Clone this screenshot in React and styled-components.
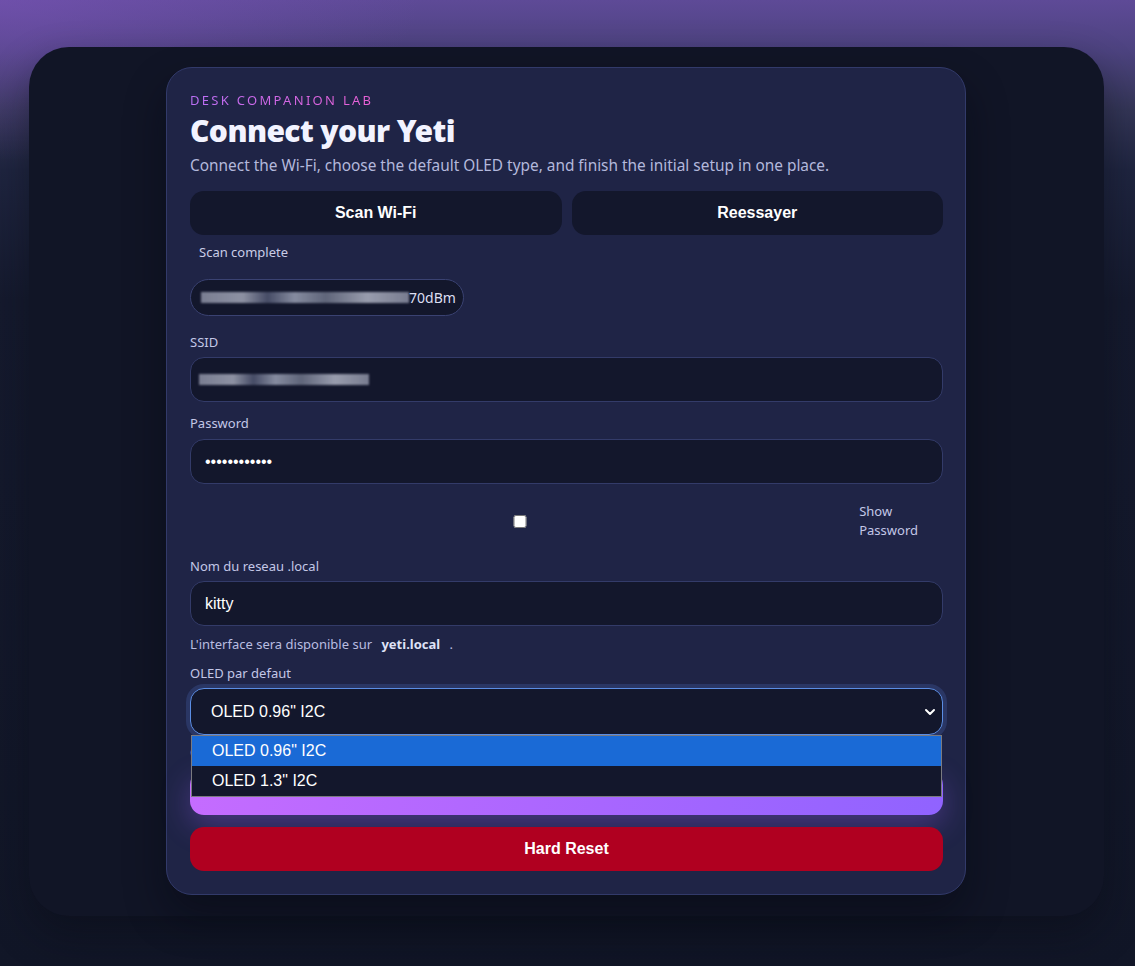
import React from 'react';
import styled, { createGlobalStyle } from 'styled-components';

const GlobalStyle = createGlobalStyle`
  html, body {
    margin: 0;
    padding: 0;
  }
  body {
    min-height: 966px;
    font-family: "Noto Sans", "Open Sans", sans-serif;
    background:
      radial-gradient(ellipse 420px 160px at 0% 0%, rgba(124, 84, 186, 0.55), transparent 100%),
      linear-gradient(180deg, #5e4a97 0px, #4d4380 50px, #343657 110px, #1f2540 170px, #151a2e 300px, #111627 100%);
  }
`;

const Page = styled.div`
  padding: 47px 0 51px;
`;

const Frame = styled.div`
  width: 1075px;
  margin-left: 29px;
  padding: 20px 0 21px;
  box-sizing: border-box;
  background: #111526;
  border-radius: 40px;
  box-shadow: 0 18px 40px rgba(8, 10, 20, 0.45);
`;

const Card = styled.main`
  width: 800px;
  margin-left: 137px;
  box-sizing: border-box;
  padding: 23px 22px 23px 23px;
  background: #1f2446;
  border: 1px solid #323a6a;
  border-radius: 26px;
  box-shadow: 0 20px 40px rgba(5, 7, 16, 0.45);
  display: flex;
  flex-direction: column;
`;

const Eyebrow = styled.div`
  font-size: 13px;
  line-height: 18px;
  letter-spacing: 2.3px;
  text-transform: uppercase;
  background: linear-gradient(90deg, #bb6ff6, #ea60d6);
  -webkit-background-clip: text;
  background-clip: text;
  color: transparent;
  width: max-content;
`;

const Title = styled.h1`
  margin: 4px 0 0;
  font-size: 30px;
  line-height: 36px;
  font-weight: 900;
  letter-spacing: -0.6px;
  color: #f2f3ff;
`;

const Subtitle = styled.p`
  margin: 6px 0 0;
  font-size: 15.4px;
  line-height: 22px;
  color: #b3b8dc;
`;

const ButtonRow = styled.div`
  margin-top: 14px;
  display: grid;
  grid-template-columns: 1fr 1fr;
  gap: 10px;
`;

const Button = styled.button`
  height: 44px;
  border: none;
  border-radius: 14px;
  padding: 0 0 ${(p) => (p.$variant === 'primary' ? 8 : 0)}px;
  font-family: "Liberation Sans", Arial, sans-serif;
  font-size: 16px;
  font-weight: 700;
  color: #ffffff;
  background: ${(p) =>
    p.$variant === 'primary'
      ? 'linear-gradient(100deg, #c56cff 0%, #a866ff 55%, #9063ff 100%)'
      : p.$variant === 'danger'
      ? '#b00020'
      : '#13172c'};
  box-shadow: ${(p) =>
    p.$variant === 'primary' ? '0 10px 30px rgba(160, 96, 255, 0.32)' : 'none'};
  margin-top: ${(p) => p.$top || 0}px;
  cursor: pointer;
`;

const Status = styled.div`
  margin-top: 8px;
  padding-left: 9px;
  font-size: 13px;
  line-height: 18px;
  color: #c9cce6;
`;

const NetworkPill = styled.div`
  margin-top: 18px;
  width: 274px;
  height: 37px;
  box-sizing: border-box;
  display: flex;
  align-items: center;
  padding-left: 10px;
  border: 1px solid #3a4272;
  border-radius: 19px;
  background: #13172c;
  font-size: 14px;
  color: #dcdff2;
`;

const Redacted = styled.span`
  display: inline-block;
  width: ${(p) => p.$w}px;
  height: 11px;
  background: linear-gradient(
    90deg,
    #8c90a4 0%,
    #a3a7b8 20%,
    #4f5570 32%,
    #9aa0b4 45%,
    #6d7388 60%,
    #b0b4c4 80%,
    #8a8ea2 100%
  );
  filter: blur(1px);
  opacity: 0.85;
`;

const Label = styled.label`
  display: block;
  margin-top: ${(p) => p.$top}px;
  font-size: 13px;
  line-height: 18px;
  color: #c3c7e6;
`;

const inputLook = `
  height: 45px;
  box-sizing: border-box;
  border: 1px solid #333b69;
  border-radius: 14px;
  background: #13172c;
  color: #ffffff;
  font-family: "Liberation Sans", Arial, sans-serif;
  font-size: 16px;
`;

const TextInput = styled.input`
  ${inputLook}
  display: block;
  width: 100%;
  margin-top: ${(p) => p.$top}px;
  padding: 0 14px;
  outline: none;
`;

const FakeInput = styled.div`
  ${inputLook}
  margin-top: ${(p) => p.$top}px;
  display: flex;
  align-items: center;
  padding: 0 8px;
`;

const CheckRow = styled.label`
  margin-top: 18px;
  display: flex;
  align-items: center;
  gap: 9px;
  padding-right: 25px;
  font-size: 13px;
  line-height: 19px;
  color: #c3c7e6;
`;

const Checkbox = styled.input`
  flex: 1;
  height: 13px;
  margin: 0;
`;

const CheckText = styled.span`
  width: min-content;
`;

const Hint = styled.div`
  margin-top: ${(p) => p.$top}px;
  font-size: 13px;
  line-height: 18px;
  color: #b9bde0;
`;

const Host = styled.strong`
  padding: 0 6px;
  color: #dfe2f6;
`;

const SelectWrap = styled.div`
  position: relative;
  margin-top: 6px;
`;

const SelectBox = styled.div`
  height: 47px;
  box-sizing: border-box;
  display: flex;
  align-items: center;
  justify-content: space-between;
  padding: 0 5px 0 20px;
  border: 1px solid #5b8de3;
  border-radius: 14px;
  background: #13172c;
  box-shadow: 0 0 0 4px rgba(80, 120, 210, 0.22);
  font-family: "Liberation Sans", Arial, sans-serif;
  font-size: 16px;
  color: #ffffff;
`;

const OptionList = styled.ul`
  position: absolute;
  top: 47px;
  left: 1px;
  right: 1px;
  z-index: 5;
  margin: 0;
  padding: 0;
  list-style: none;
  border: 1px solid #7a7a80;
  background: #13172c;
`;

const Option = styled.li`
  height: 30px;
  line-height: 30px;
  padding-left: 20px;
  font-family: "Liberation Sans", Arial, sans-serif;
  font-size: 16px;
  color: #ffffff;
  background: ${(p) => (p.$active ? '#1a6ad6' : '#13172c')};
`;

const Chevron = () => (
  <svg width="14" height="14" viewBox="0 0 14 14" fill="none">
    <polyline
      points="3,5 7,9 11,5"
      stroke="#ffffff"
      strokeWidth="2"
      strokeLinecap="round"
      strokeLinejoin="round"
    />
  </svg>
);

const App = () => {
  return (
    <Page>
      <GlobalStyle />
      <Frame>
        <Card>
          <Eyebrow>Desk Companion Lab</Eyebrow>
          <Title>Connect your Yeti</Title>
          <Subtitle>
            Connect the Wi-Fi, choose the default OLED type, and finish the initial setup in one place.
          </Subtitle>

          <ButtonRow>
            <Button>Scan Wi-Fi</Button>
            <Button>Reessayer</Button>
          </ButtonRow>
          <Status>Scan complete</Status>

          <NetworkPill>
            <Redacted $w={208} />
            <span>70dBm</span>
          </NetworkPill>

          <Label $top={17}>SSID</Label>
          <FakeInput $top={6}>
            <Redacted $w={170} />
          </FakeInput>

          <Label $top={12}>Password</Label>
          <TextInput $top={7} type="password" defaultValue="yetiyetiyeti" readOnly />

          <CheckRow>
            <Checkbox type="checkbox" />
            <CheckText>Show Password</CheckText>
          </CheckRow>

          <Label $top={17}>Nom du reseau .local</Label>
          <TextInput $top={6} type="text" defaultValue="kitty" readOnly />
          <Hint $top={9}>
            L'interface sera disponible sur <Host>yeti.local</Host> .
          </Hint>

          <Label $top={11}>OLED par defaut</Label>
          <SelectWrap>
            <SelectBox>
              <span>OLED 0.96" I2C</span>
              <Chevron />
            </SelectBox>
            <OptionList>
              <Option $active>OLED 0.96" I2C</Option>
              <Option>OLED 1.3" I2C</Option>
            </OptionList>
          </SelectWrap>
          <Hint $top={8}>Choisissez l'ecran installe sur votre Yeti.</Hint>

          <Button $variant="primary" $top={10}>Enregistrer</Button>
          <Button $variant="danger" $top={12}>Hard Reset</Button>
        </Card>
      </Frame>
    </Page>
  );
};

export default App;
